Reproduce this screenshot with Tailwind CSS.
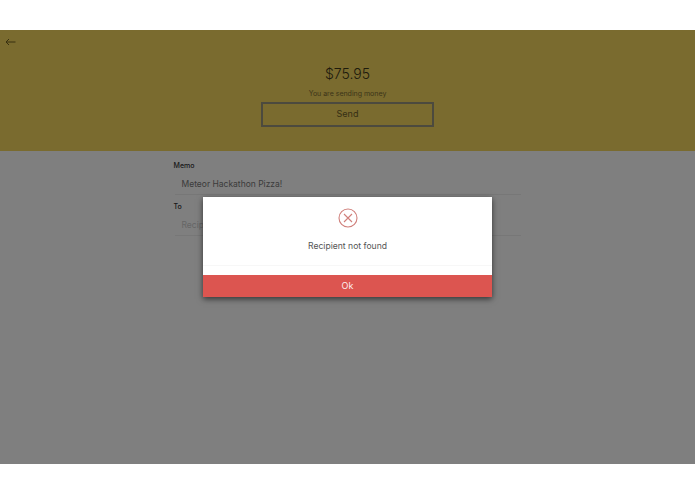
<!DOCTYPE html>
<html lang="en">
<head>
  <meta charset="UTF-8" />
  <title>Send money</title>
  <script src="https://cdn.jsdelivr.net/npm/@tailwindcss/browser@4"></script>
</head>
<body class="bg-white font-['Inter',sans-serif]">
  <div class="pt-[30px] pb-[30px]">
    <div class="relative h-[434px] bg-white overflow-hidden">
      <!-- Header -->
      <div class="relative h-[121px] bg-[#f5d65f] flex flex-col items-center pt-[34px]">
        <svg class="absolute left-[5px] top-[8px]" width="11" height="8" viewBox="0 0 11 8" fill="none" stroke="#6f5f20" stroke-width="1">
          <path d="M10.5 4H1M4 1L1 4l3 3" />
        </svg>
        <div class="text-[14px] leading-5 font-light text-[#3c3618]">$75.95</div>
        <div class="mt-[5px] text-[7px] leading-[10px] text-[#7a6c30]">You are sending money</div>
        <button class="mt-[3px] w-[173px] h-[25px] pb-[1px] border-2 border-[#98947c] text-[9px] text-[#6c6028]">Send</button>
      </div>

      <!-- Form -->
      <div class="w-[346px] mx-auto pt-[10px]">
        <label class="block -ml-[1px] text-[7px] leading-[10px] font-medium text-[#333]">Memo</label>
        <div class="h-[24px] pl-[7px] pt-[3px] flex items-center border-b border-[#eee] text-[8.5px] text-[#777]">Meteor Hackathon Pizza!</div>
        <label class="block -ml-[1px] mt-[7px] text-[7px] leading-[10px] font-medium text-[#333]">To</label>
        <div class="h-[24px] pl-[7px] pt-[3px] flex items-center border-b border-[#eee] text-[8.5px] text-[#ccc]">Recipient</div>
      </div>

      <div class="absolute inset-0 bg-black/50"></div>

      <!-- Error dialog -->
      <div class="absolute left-[203px] top-[167px] w-[289px] h-[100px] bg-white flex flex-col shadow-[0_2px_6px_rgba(0,0,0,0.6)]">
        <div class="flex-1 flex flex-col items-center pt-[11px] border-b border-[#f7f7f7] mb-[9px]">
          <svg width="20" height="20" viewBox="0 0 20 20" fill="none" stroke="#d0807c" stroke-width="1.1">
            <circle cx="10" cy="10" r="9" />
            <path d="M6 6l8 8M14 6l-8 8" />
          </svg>
          <div class="mt-[10px] text-[8.6px] leading-4 text-[#555]">Recipient not found</div>
        </div>
        <button class="h-[22px] bg-[#dc5550] text-[#fdeeee] text-[9px]">Ok</button>
      </div>
    </div>
  </div>
</body>
</html>
